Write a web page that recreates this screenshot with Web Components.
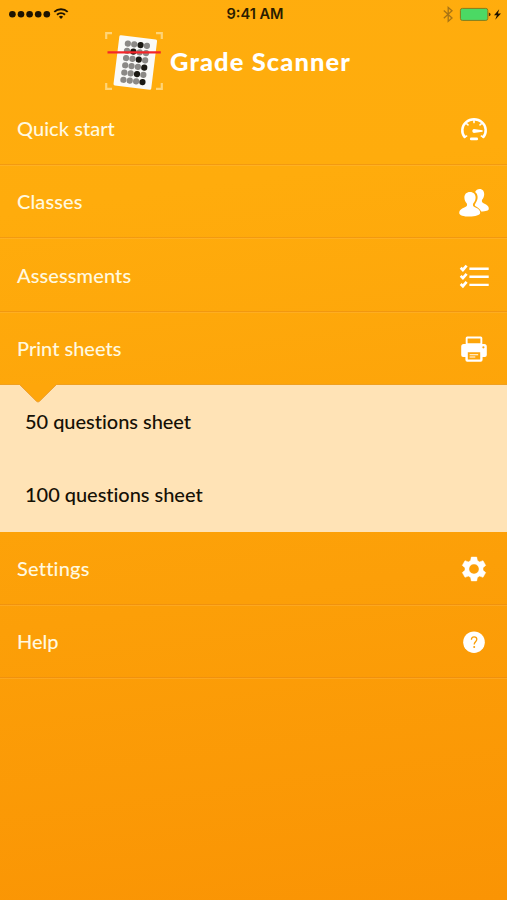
<!DOCTYPE html>
<html lang="en">
<head>
<meta charset="utf-8">
<meta name="viewport" content="width=device-width, initial-scale=1">
<title>Grade Scanner</title>
<style>
  html, body { margin: 0; height: 100%; }
  body { font-family: Lato, "Open Sans", sans-serif; overflow: hidden; }
</style>
</head>
<body>
<grade-app>
  <status-bar slot="status" time="9:41 AM"></status-bar>
  <app-header slot="header">Grade Scanner</app-header>
  <menu-row icon="gauge" style="--tracking: 0.05px">Quick start</menu-row>
  <menu-row icon="people" style="--tracking: 0.1px">Classes</menu-row>
  <menu-row icon="checklist" style="--tracking: 0.1px">Assessments</menu-row>
  <menu-row icon="printer" style="--tracking: 0px" open>Print sheets</menu-row>
  <sub-menu>
    <sub-item>50 questions sheet</sub-item>
    <sub-item>100 questions sheet</sub-item>
  </sub-menu>
  <menu-row icon="gear" style="--tracking: 0.2px">Settings</menu-row>
  <menu-row icon="help" style="--tracking: 0px">Help</menu-row>
</grade-app>

<script>
(function () {
  const ICONS = {
    gauge: `
      <g fill="none" stroke="#fff" stroke-linecap="round">
        <path d="M6.6 24 A11.7 11.1 0 1 1 25.4 24" stroke-width="2.5"/>
        <path d="M13.2 25.9H18.8" stroke-width="2.6"/>
        <path d="M16 7.5V9.6M8.8 10.8L10 11.9M23.2 10.8L22 11.9M6.6 24L8.6 23.1M25.4 24L23.4 23.1" stroke-width="1.6"/>
      </g>
      <path d="M15.8 16.1L24.6 17.3V18.7L15.8 19.9A1.95 1.95 0 0 1 15.8 16.1Z"/>`,
    people: `
      <path d="M17.1 5.2C18 3.1 19.6 2.1 21.6 2.1C24.7 2.1 26.4 4.5 26.2 7.7C26.1 10 25.2 11.5 24.1 13C23.4 14.8 24.1 15.8 26 16.7C29 18 31 19.3 30.8 22.2C30.7 23.8 28 24.6 23.1 24.8C22 22.2 20 20.8 17.6 19.5C16.5 18.8 16.7 17.6 17.4 16.6C18.9 14.4 19.6 12.5 19.6 10.2C19.5 8 18.7 6.3 17.1 5.2Z" transform="translate(0 .8)"/>
      <path d="M12 5.1C15.5 5.1 17.8 7.5 17.6 10.9C17.5 13.4 16.6 15 15.2 16.6C14.4 18.5 15.2 19.7 17.5 20.7C20.6 22 22.3 23.4 22.2 26.3C22 28.6 17.2 29.8 11.5 29.8C5.7 29.8 1.2 28.7 1.2 26.2C1.2 23.3 3.2 22 6.3 20.7C8.7 19.7 9.6 18.5 8.8 16.6C7.4 15 6.5 13.4 6.4 10.9C6.2 7.5 8.5 5.1 12 5.1Z" transform="translate(0 .8)"/>`,
    checklist: `
      <g fill="none" stroke="#fff">
        <path d="M11.4 8.7H30.7M11.4 16.8H30.7M11.4 24.9H30.7" stroke-width="2.4"/>
        <path d="M2.7 7.8L4.9 10L8.6 5.7M2.7 15.9L4.9 18.1L8.6 13.8M2.7 24L4.9 26.2L8.6 21.9" stroke-width="2.7"/>
      </g>`,
    printer: `
      <path fill-rule="evenodd" d="M9.2 3.6H22.8Q24.3 3.6 24.3 5.1V12H7.7V5.1Q7.7 3.6 9.2 3.6ZM9.6 5.4V10.2H22.4V5.4Z"/>
      <path fill-rule="evenodd" d="M5.7 11.1H26.3Q28.8 11.1 28.8 13.6V22Q28.8 23.9 26.9 23.9H24.6V26.8Q24.6 28.7 22.7 28.7H9.3Q7.4 28.7 7.4 26.8V23.9H5.1Q3.2 23.9 3.2 22V13.6Q3.2 11.1 5.7 11.1ZM9.8 19.2V26.6H22.2V19.2ZM25.4 13.2A1.1 1.1 0 1 0 25.4 15.4A1.1 1.1 0 1 0 25.4 13.2Z"/>
      <path d="M11.6 21.3H20.2V22.3H11.6ZM11.6 23.5H17.3V24.6H11.6Z"/>`,
    gear: `
      <path fill-rule="evenodd" d="M13.3 4.1H18.7L19.4 7.6L21.6 8.9L25 7.7L27.7 12.4L25 14.7V17.3L27.7 19.6L25 24.3L21.6 23.1L19.4 24.4L18.7 27.9H13.3L12.6 24.4L10.4 23.1L7 24.3L4.3 19.6L7 17.3V14.7L4.3 12.4L7 7.7L10.4 8.9L12.6 7.6ZM16 10.9A5.1 5.1 0 1 0 16 21.1A5.1 5.1 0 1 0 16 10.9Z" stroke="#fff" stroke-width=".5" stroke-linejoin="round"/>`,
    help: `
      <circle cx="16" cy="16.2" r="10.8"/>
      <path d="M13.4 13.7C13.4 11.7 14.5 10.8 16.1 10.8C17.7 10.8 18.8 11.8 18.8 13.3C18.8 15.6 16.2 15.9 16.2 18.4" fill="none" stroke="#fa9f08" stroke-width="1.3"/>
      <circle cx="16.2" cy="20.9" r="1" fill="#fa9f08"/>`,
  };

  class GradeApp extends HTMLElement {
    constructor() {
      super();
      this.attachShadow({ mode: 'open' }).innerHTML = `
        <style>
          :host {
            display: flex;
            flex-direction: column;
            height: 100vh;
            background: linear-gradient(172deg, #ffad0e 0%, #ffac0c 22%, #fc9f08 65%, #fa9404 100%);
          }
          nav { display: flex; flex-direction: column; }
        </style>
        <slot name="status"></slot>
        <slot name="header"></slot>
        <nav><slot></slot></nav>
      `;
    }
  }

  class StatusBar extends HTMLElement {
    constructor() {
      super();
      this.attachShadow({ mode: 'open' }).innerHTML = `
        <style>
          :host {
            display: grid;
            grid-template-columns: 1fr auto 1fr;
            align-items: center;
            height: 27px;
            flex: none;
            padding: 0 5px 0 8px;
            box-sizing: border-box;
            color: #2a1c00;
            font: 600 14.6px/27px Inter, sans-serif;
          }
          svg { display: block; }
          .time { padding: 1px 0 0; }
          .right { justify-self: end; }
        </style>
        <svg width="64" height="27" viewBox="8 0 64 27" fill="#1d1300">
          <circle cx="12.4" cy="13.2" r="3.3"/><circle cx="21" cy="13.2" r="3.3"/>
          <circle cx="29.6" cy="13.2" r="3.3"/><circle cx="38.2" cy="13.2" r="3.3"/>
          <circle cx="46.8" cy="13.2" r="3.3"/>
          <g fill="none" stroke="#1d1300" stroke-width="1.9">
            <path d="M54.3 10.9A9.6 9.6 0 0 1 67.7 10.9"/>
            <path d="M57 13.8A5.7 5.7 0 0 1 65 13.8"/>
          </g>
          <path d="M58.9 15.8A3 3 0 0 1 63.1 15.8L61 18Z"/>
        </svg>
        <span class="time"></span>
        <svg class="right" width="62" height="27" viewBox="440 0 62 27">
          <path d="M443.8 9.6L452 17L448.2 20.4V6.4L452 9.8L443.8 17.2" fill="none" stroke="#a97414" stroke-width="1.3"/>
          <rect x="460.4" y="7.4" width="27.4" height="12" rx="2" fill="#4bd964" stroke="#867c1c" stroke-width="1"/>
          <path d="M488.8 11.6Q490.6 12 490.6 13.4Q490.6 14.8 488.8 15.2Z" fill="#4a3300"/>
          <path d="M499.2 8.2L494 14.2H496.9L495.2 18.8L501 12.6H497.9Z" fill="#1d1300"/>
        </svg>
      `;
    }

    connectedCallback() {
      this.shadowRoot.querySelector('.time').textContent = this.getAttribute('time') || '';
    }
  }

  class AppHeader extends HTMLElement {
    constructor() {
      super();
      // filled bubble per line of the answer sheet
      const marked = [2, 1, 2, 3, 2, 3];
      const bubbles = marked.map((m, row) => [0, 1, 2, 3].map((col) => {
        const fill = col === m ? '#1c1a14' : '#8b8986';
        return `<circle cx="${-9.7 + col * 6.4}" cy="${-17.9 + row * 7.3}" r="3.1" fill="${fill}"/>`;
      }).join('')).join('');

      this.attachShadow({ mode: 'open' }).innerHTML = `
        <style>
          :host {
            display: flex;
            align-items: center;
            gap: 6px;
            flex: none;
            height: 64.7px;
            padding: 3px 0 0 104px;
            box-sizing: border-box;
            color: #fff;
          }
          svg { display: block; flex: none; }
          h1 {
            margin: 0;
            font-size: 25.5px;
            font-weight: 900;
            line-height: 30px;
            letter-spacing: 1.1px;
            white-space: nowrap;
          }
        </style>
        <svg width="60" height="62" viewBox="104 30 60 62">
          <path d="M106.2 39V33.2H112M156 33.2H161.8V39M161.8 83V88.8H156M112 88.8H106.2V83" fill="none" stroke="#ffd477" stroke-width="2.2"/>
          <g transform="translate(135.3 62.5) rotate(7)">
            <rect x="-19" y="-25.3" width="38" height="50.6" rx="1.5" fill="#fafaf8"/>
            ${bubbles}
          </g>
          <path d="M107.5 52.3H160.8" stroke="#f3262a" stroke-width="2.3"/>
        </svg>
        <h1><slot></slot></h1>
      `;
    }
  }

  class MenuRow extends HTMLElement {
    constructor() {
      super();
      this.attachShadow({ mode: 'open' }).innerHTML = `
        <style>
          :host {
            display: flex;
            align-items: center;
            justify-content: space-between;
            height: 73.33px;
            padding: 2px 17px 0;
            box-sizing: border-box;
            border-bottom: 1px solid rgba(220, 125, 25, 0.38);
            box-shadow: 0 1px 0 rgba(255, 190, 90, 0.3);
            color: #fff9e0;
            font-size: 20px;
            font-weight: 500;
            letter-spacing: var(--tracking, 0);
          }
          :host([open]) { border-bottom-color: #f0a020; box-shadow: none; }
          span { padding-bottom: 2px; }
          svg { display: block; fill: #fff; }
        </style>
        <span><slot></slot></span>
        <svg width="32" height="32" viewBox="0 0 32 32" aria-hidden="true"></svg>
      `;
    }

    connectedCallback() {
      this.shadowRoot.querySelector('svg').innerHTML = ICONS[this.getAttribute('icon')] || '';
    }
  }

  class SubMenu extends HTMLElement {
    constructor() {
      super();
      this.attachShadow({ mode: 'open' }).innerHTML = `
        <style>
          :host {
            display: block;
            position: relative;
            height: 146.67px;
            background: #ffe3b6;
          }
          .notch { position: absolute; left: 19px; top: -1px; display: block; }
        </style>
        <svg class="notch" width="38" height="20" viewBox="0 0 38 20">
          <path d="M0 0H38L20.5 17.3Q19 18.8 17.5 17.3Z" fill="#fea60b"/>
          <path d="M1 1L17.5 17.3Q19 18.8 20.5 17.3L37 1" fill="none" stroke="#eda032" stroke-width="1"/>
        </svg>
        <slot></slot>
      `;
    }
  }

  class SubItem extends HTMLElement {
    constructor() {
      super();
      this.attachShadow({ mode: 'open' }).innerHTML = `
        <style>
          :host {
            display: flex;
            align-items: center;
            height: 73.33px;
            padding: 0 0 1px 25px;
            box-sizing: border-box;
            color: #151005;
            font-size: 20px;
            font-weight: 500;
            letter-spacing: -0.03px;
          }
        </style>
        <span><slot></slot></span>
      `;
    }
  }

  customElements.define('grade-app', GradeApp);
  customElements.define('status-bar', StatusBar);
  customElements.define('app-header', AppHeader);
  customElements.define('menu-row', MenuRow);
  customElements.define('sub-menu', SubMenu);
  customElements.define('sub-item', SubItem);
})();
</script>
</body>
</html>
